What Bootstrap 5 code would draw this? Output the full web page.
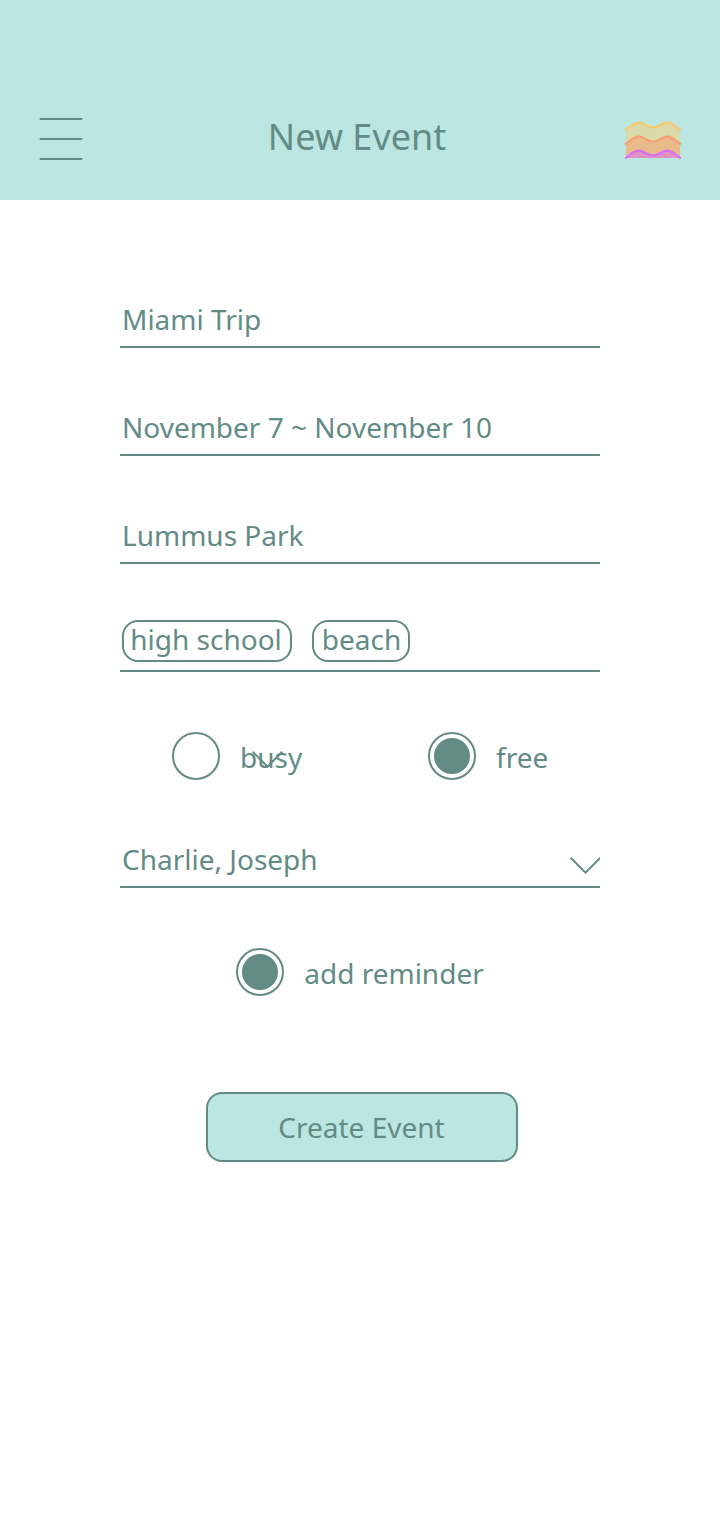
<!DOCTYPE html>
<html lang="en">
<head>
<meta charset="utf-8">
<meta name="viewport" content="width=device-width, initial-scale=1">
<title>New Event</title>
<link href="https://cdn.jsdelivr.net/npm/bootstrap@5.3.0/dist/css/bootstrap.min.css" rel="stylesheet">
<style>
  :root { --ink: #638b85; --mint: #bce6e1; }
  body { font: 28px/38px "Noto Sans", sans-serif; color: var(--ink); background: #fff; }
  .topbar { height: 200px; background: var(--mint); padding: 118px 38px 0 39px; }
  .topbar h1 { font-size: 36px; line-height: 38px; font-weight: 400; padding-left: 7px; }
  .event-form { width: 480px; padding-top: 40px; }
  .form-line { height: 108px; }
  .field { border-bottom: 2px solid var(--ink); padding-bottom: 8px; }
  .field-text { padding-left: 2px; }
  .chip { height: 42px; border: 2px solid var(--ink); border-radius: 16px; line-height: 34px; white-space: nowrap; }
  .chip-school { width: 170px; margin-left: 2px; padding-right: 2px; }
  .chip-beach { width: 98px; margin-left: 20px; padding-left: 1px; }
  .choice { width: 256px; margin-left: 52px; }
  .dial { width: 48px; height: 48px; border: 2px solid var(--ink); border-radius: 50%; padding: 4px; background: #fff; }
  .dial.on::before { content: ""; display: block; width: 36px; height: 36px; border-radius: 50%; background: var(--ink); }
  .dial-label { padding: 6px 0 4px 20px; }
  .stray { left: 79.5px; top: 19px; }
  .btn-create { width: 312px; height: 70px; margin: 96px 0 0 86px; border: 2px solid var(--ink); border-radius: 16px; background: var(--mint); color: var(--ink); font-size: 28px; line-height: 38px; padding: 0 1px 0 0; }
  svg { display: block; fill: none; flex: none; }
</style>
</head>
<body>
<header class="topbar d-flex justify-content-between align-items-start">
  <svg width="44" height="42" stroke="#638b85" stroke-width="2"><path d="M.7 1H43.4M.7 21H43.4M.7 41H43.4"/></svg>
  <h1 class="mb-0">New Event</h1>
  <svg width="58" height="42" stroke-width="2.2">
    <path d="M2 11.6C7 8 10 4.6 15 4.6C20 4.6 23 9.5 29 9.5S38 4.6 43 4.6C48 4.6 51 8 56 11.6V26H2Z" fill="#ffcb6b" fill-opacity=".45"/>
    <path d="M2 25.6C7 22 10 18.6 15 18.6C20 18.6 23 23.5 29 23.5S38 18.6 43 18.6C48 18.6 51 22 56 25.6V40H2Z" fill="#e9ba8a"/>
    <path d="M2 39.6C7 36 10 32.6 15 32.6C20 32.6 23 37.5 29 37.5S38 32.6 43 32.6C48 32.6 51 36 56 39.6V40H2Z" fill="#e091c4"/>
    <path d="M1.2 12.3C7 8 10 4.6 15 4.6C20 4.6 23 9.5 29 9.5S38 4.6 43 4.6C48 4.6 51 8 56.8 12.3" stroke="#fac96f"/>
    <path d="M1.2 26.3C7 22 10 18.6 15 18.6C20 18.6 23 23.5 29 23.5S38 18.6 43 18.6C48 18.6 51 22 56.8 26.3" stroke="#fa9f71"/>
    <path d="M1.2 40.3C7 36 10 32.6 15 32.6C20 32.6 23 37.5 29 37.5S38 32.6 43 32.6C48 32.6 51 36 56.8 40.3" stroke="#d96ff7"/>
  </svg>
</header>
<main class="event-form mx-auto">
  <div class="form-line d-flex align-items-end"><div class="field w-100"><div class="field-text">Miami Trip</div></div></div>
  <div class="form-line d-flex align-items-end"><div class="field w-100"><div class="field-text">November 7 ~ November 10</div></div></div>
  <div class="form-line d-flex align-items-end"><div class="field w-100"><div class="field-text">Lummus Park</div></div></div>
  <div class="form-line d-flex align-items-end">
    <div class="field w-100 d-flex">
      <span class="chip chip-school text-center">high school</span>
      <span class="chip chip-beach text-center">beach</span>
    </div>
  </div>
  <div class="form-line d-flex align-items-end">
    <div class="choice d-flex position-relative">
      <span class="dial"></span><span class="dial-label">busy</span>
      <svg class="stray position-absolute" width="31" height="20" stroke="#638b85" stroke-width="2"><path d="M.7 .8L15.5 15.6L30.3 .8"/></svg>
    </div>
    <div class="d-flex"><span class="dial on"></span><span class="dial-label">free</span></div>
  </div>
  <div class="form-line d-flex align-items-end">
    <div class="field w-100 d-flex justify-content-between align-items-end">
      <div class="field-text">Charlie, Joseph</div>
      <svg width="30.5" height="21" viewBox="0 0 30.5 21" stroke="#638b85" stroke-width="2"><path d="M.7 .8L15.5 15.6L30.3 .8"/></svg>
    </div>
  </div>
  <div class="form-line d-flex align-items-end justify-content-center">
    <div class="d-flex"><span class="dial on"></span><span class="dial-label">add reminder</span></div>
  </div>
  <button class="btn btn-create" type="button">Create Event</button>
</main>
<script src="https://cdn.jsdelivr.net/npm/bootstrap@5.3.0/dist/js/bootstrap.bundle.min.js"></script>
</body>
</html>
